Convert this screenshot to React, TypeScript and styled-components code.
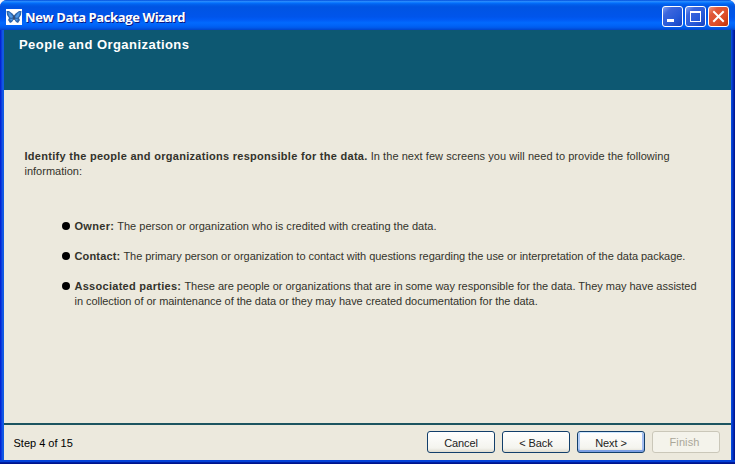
import React from "react";
import styled, { createGlobalStyle, css } from "styled-components";

const Global = createGlobalStyle`
  * { box-sizing: border-box; }
  html, body { margin: 0; padding: 0; overflow: hidden; background: #f4f5fa; }
`;

const Frame = styled.div`
  width: 735px;
  height: 464px;
  display: flex;
  flex-direction: column;
  padding: 0 4px 4px;
  border-radius: 7px 7px 0 0;
  overflow: hidden;
  background: linear-gradient(90deg, #0019cf 0, #0831d9 1px, #1660e8 3px, #0855dd 4px, #0855dd 731px, #0441d8 732px, #001ea0 734px, #00138c 735px);
  box-shadow: inset 0 -1px #00138c, inset 0 -2px #001ea0, inset 0 -4px #0441d8;
  font-family: "Liberation Sans", Arial, sans-serif;
  font-size: 11px;
  color: #33332b;
`;

const TitleBar = styled.header`
  flex: 0 0 30px;
  margin: 0 -4px;
  padding: 3px 6px 0;
  display: flex;
  align-items: center;
  background: linear-gradient(180deg, #0048d8 0%, #2583f8 4%, #288eff 6%, #127dff 8%, #036ffc 10%, #0262ee 14%, #0057e5 20%, #0054e3 24%, #0055eb 56%, #005bf5 66%, #026afe 76%, #0062f6 86%, #005aea 92%, #0050dc 96%, #0044cc 100%);
`;

const Title = styled.h1`
  flex: 1;
  margin: 0 0 0 3px;
  font: bold 13px/20px "Open Sans", "Noto Sans", sans-serif;
  letter-spacing: -0.39px;
  color: #fff;
  text-shadow: 1px 1px #0a1883;
  white-space: nowrap;
`;

const Controls = styled.div`
  display: flex;
  gap: 2px;
`;

const Control = styled.button<{ $close?: boolean }>`
  width: 21px;
  height: 21px;
  padding: 0;
  border: 1px solid #fff;
  border-radius: 3px;
  background: linear-gradient(135deg, #7f9ff0 0, #3c66dd 25%, #2559d8 65%, #1540c0 100%);
  ${(p) => p.$close && css`background: linear-gradient(135deg, #ee9a80 0, #e0583a 25%, #dc4c28 65%, #bd3005 100%);`}
  display: block;

  svg { display: block; }
`;

const Heading = styled.section`
  flex: 0 0 60px;
  padding: 6px 15px;
  background: #0d5872;
  color: #fff;
  font-size: 13px;
  line-height: 17px;
  font-weight: bold;
  letter-spacing: 0.45px;
`;

const Content = styled.main`
  flex: 1;
  padding: 59px 20px 0 20.5px;
  background: #ece9dd;
`;

const Line = styled.div`
  height: 15px;
  line-height: 15px;
  white-space: nowrap;
`;

const Run = styled.span<{ $track?: number }>`
  letter-spacing: ${(p) => p.$track ?? 0}px;
`;

const Strong = styled(Run)`
  font-weight: bold;
`;

const List = styled.ul`
  list-style: none;
  margin: 40px 0 0;
  padding: 0 0 0 37.5px;
  display: flex;
  flex-direction: column;
  gap: 15px;
`;

const Item = styled.li`
  display: flex;
  gap: 4.5px;
`;

const Bullet = styled.span`
  flex: none;
  width: 8px;
  height: 8px;
  margin-top: 3px;
  border-radius: 50%;
  background: #000;
`;

const Footer = styled.footer`
  flex: 0 0 37px;
  display: flex;
  justify-content: space-between;
  padding: 6px 11px 0 9.5px;
  border-top: 2px solid #1c5460;
  background: #ece9dd;
`;

const Step = styled.div`
  line-height: 24px;
  color: #000;
`;

const Buttons = styled.div`
  display: flex;
  gap: 7px;
`;

const Button = styled.button<{ $primary?: boolean }>`
  width: 68px;
  height: 22px;
  padding: 1px 0 0;
  border: 1px solid #123f6b;
  border-radius: 3px;
  background: linear-gradient(#fff, #f4f4ee 80%, #dfdcd0);
  box-shadow: ${(p) => (p.$primary ? "inset 0 1px #cee7ff, inset 0 -2px #7b9ee3, inset 2px 0 #b4cdf5, inset -2px 0 #a3bdf0" : "none")};
  font: 11px/20px "Liberation Sans", Arial, sans-serif;
  letter-spacing: -0.1px;
  color: #222;

  &:disabled {
    border-color: #cac7b9;
    background: #f4f3eb;
    color: #aaa799;
    line-height: 18px;
    padding: 0 3px 0 0;
    letter-spacing: 0.1px;
  }
`;

const ButterflyIcon = () => (
  <svg width="16" height="16" viewBox="0 0 16 16">
    <rect width="16" height="16" fill="#fff" />
    <path d="M0.5 2 3 2 7 5 8 7 9 5 13 2 15.5 2 15 6 13 9 14 11 12 14 10 13 8 10 6 13 4 14 2 11 3 9 1 6Z" fill="#2c66ad" />
    <path d="M2 3 4 4 7 8 5 9 3 7ZM14 3 12 4 9 8 11 9 13 7ZM4 10 7 10 5 12ZM12 10 9 10 11 12Z" fill="#4a96e6" />
    <path d="M8 6V11" stroke="#363b4b" />
  </svg>
);

const items = [
  { term: "Owner:", termTrack: 0.3, lines: ["The person or organization who is credited with creating the data."], tracks: [0.01] },
  { term: "Contact:", termTrack: 0.15, lines: ["The primary person or organization to contact with questions regarding the use or interpretation of the data package."], tracks: [-0.036] },
  {
    term: "Associated parties:",
    termTrack: 0.28,
    lines: [
      "These are people or organizations that are in some way responsible for the data. They may have assisted",
      "in collection of or maintenance of the data or they may have created documentation for the data.",
    ],
    tracks: [-0.018, -0.048],
  },
];

export default function App() {
  return (
    <>
      <Global />
      <Frame>
        <TitleBar>
          <ButterflyIcon />
          <Title>New Data Package Wizard</Title>
          <Controls>
            <Control aria-label="Minimize">
              <svg width="19" height="19"><path d="M4 12h7v3H4z" fill="#fff" /></svg>
            </Control>
            <Control aria-label="Maximize">
              <svg width="19" height="19"><path d="M4 4h11v11H4zM5 6v8h9V6z" fill="#fff" fillRule="evenodd" /></svg>
            </Control>
            <Control aria-label="Close" $close>
              <svg width="19" height="19"><path d="M5 5l9 9M14 5l-9 9" stroke="#fff" strokeWidth="2" strokeLinecap="square" /></svg>
            </Control>
          </Controls>
        </TitleBar>
        <Heading>People and Organizations</Heading>
        <Content>
          <Line>
            <Strong $track={0.285}>Identify the people and organizations responsible for the data.</Strong>{" "}
            <Run $track={0.06}>In the next few screens you will need to provide the following</Run>
          </Line>
          <Line>information:</Line>
          <List>
            {items.map((item) => (
              <Item key={item.term}>
                <Bullet />
                <div>
                  {item.lines.map((line, i) => (
                    <Line key={line}>
                      {i === 0 && <><Strong $track={item.termTrack}>{item.term}</Strong>{" "}</>}
                      <Run $track={item.tracks[i]}>{line}</Run>
                    </Line>
                  ))}
                </div>
              </Item>
            ))}
          </List>
        </Content>
        <Footer>
          <Step>Step 4 of 15</Step>
          <Buttons>
            <Button>Cancel</Button>
            <Button>&lt; Back</Button>
            <Button $primary>Next &gt;</Button>
            <Button disabled>Finish</Button>
          </Buttons>
        </Footer>
      </Frame>
    </>
  );
}
